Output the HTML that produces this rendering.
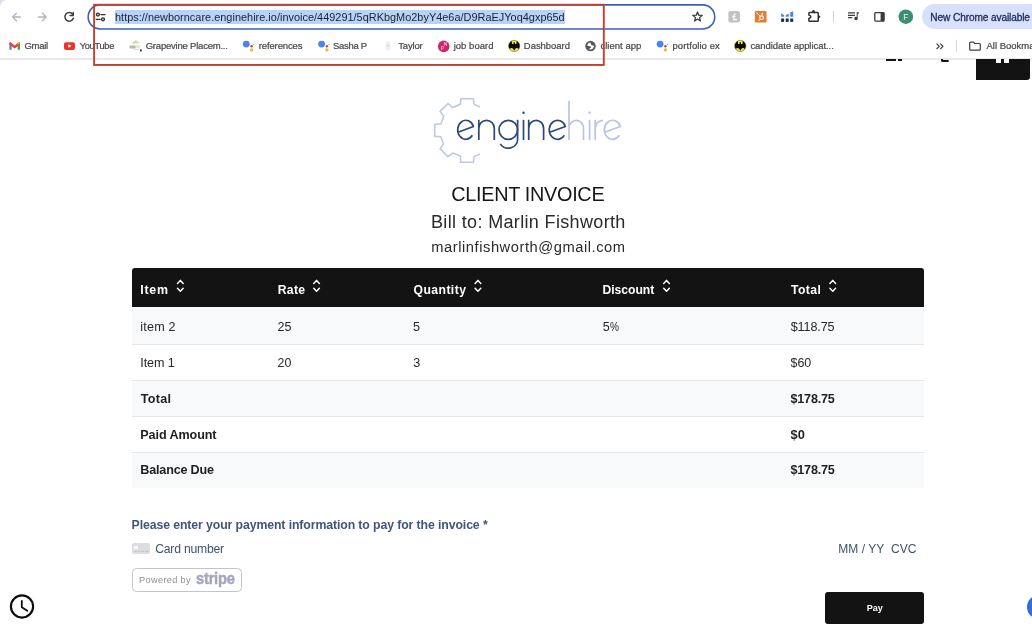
<!DOCTYPE html>
<html>
<head>
<meta charset="utf-8">
<title>Client Invoice</title>
<style>
*{box-sizing:border-box;margin:0;padding:0}
html,body{width:1032px;height:628px;overflow:hidden;background:#fff}
body{font-family:"Liberation Sans",sans-serif;position:relative;color:#212529}
#w{position:absolute;left:0;top:0;width:1032px;height:628px;overflow:hidden;will-change:transform}
.a{position:absolute}
.t{position:absolute;white-space:pre;line-height:1}
svg{position:absolute;overflow:visible}
#sep{left:0;top:58px;width:1032px;height:1.5px;background:#e9e9eb}
#sel{left:115px;top:10px;width:450px;height:13.5px;background:#b6d4f9}
#newchrome{left:921.7px;top:4.3px;width:130px;height:24.8px;border-radius:12.4px;background:#d7e1fb}
#thead{left:132px;top:268px;width:792px;height:39px;background:#141314;border-radius:3px 3px 0 0}
.row{position:absolute;left:132px;width:792px;background:#f8f9fa}
.ln{position:absolute;left:132px;width:792px;height:1px;background:#e4e6e9}
</style>
</head>
<body>
<div id="w">
<!-- ===== browser chrome ===== -->
<div class="a" style="left:0;top:0;width:6px;height:6px;background:radial-gradient(circle at 100% 100%,#fff 5.2px,#dddcf6 6px)"></div>
<div class="a" id="sep"></div>
<svg style="left:0;top:0" width="1032" height="34" viewBox="0 0 1032 34" fill="none"><rect x="88.15" y="4.85" width="626.6" height="24.1" rx="12.05" stroke="#3a60bf" stroke-width="1.55" fill="#fff"/></svg>
<div class="a" id="sel"></div>
<div class="t" style="left:115.03px;top:11.7px;font-size:10.9px;letter-spacing:0.025px;color:#1f2126;">https://newborncare.enginehire.io/invoice/449291/5qRKbgMo2byY4e6a/D9RaEJYoq4gxp65d</div>
<div class="a" id="newchrome"></div>
<div class="t" style="left:930.37px;top:12.7px;font-size:10.1px;letter-spacing:-0.101px;color:#1c2a5a;-webkit-text-stroke:0.3px #1c2a5a;">New Chrome available</div>
<!-- toolbar icons -->
<svg style="left:0;top:0" width="1032" height="60" viewBox="0 0 1032 60" fill="none">
 <!-- back / forward -->
 <g stroke="#b4b4b6" stroke-width="1.3" stroke-linecap="round" stroke-linejoin="round">
  <path d="M20.4 17H12.6M16.4 13.2L12.6 17l3.8 3.8"/>
  <path d="M38.4 17h7.8M42.4 13.2l3.8 3.8-3.8 3.8"/>
 </g>
 <!-- reload -->
 <g stroke="#3a3b3d" stroke-width="1.45" stroke-linecap="round" stroke-linejoin="round">
  <path d="M72.6 14.2A4.3 4.3 0 1 0 73.3 18.2"/>
  <path d="M73.2 12.4v3.1h-3.1" />
 </g>
 <!-- tune -->
 <g stroke="#2c2d30" stroke-width="1.35" stroke-linecap="round">
  <circle cx="97.9" cy="14.6" r="1.45"/><path d="M101 14.6h4"/>
  <circle cx="103" cy="19.3" r="1.45"/><path d="M96.2 19.3h4"/>
 </g>
 <!-- star -->
 <path d="M697.50 11.95L698.76 15.21L702.26 15.40L699.54 17.61L700.44 21.00L697.50 19.10L694.56 21.00L695.46 17.61L692.74 15.40L696.24 15.21Z" stroke="#333437" stroke-width="1.200" stroke-linejoin="round"/>
 <!-- grey ext -->
 <rect x="728.4" y="10.9" width="11.6" height="11.6" rx="2" fill="#c2c2c2"/>
 <path d="M735.600 14.300c-1.100-.4-1.700.2-1.700 1.200v4.200h3.100M732.300 16.500h3.100" stroke="#fff" stroke-width="1.250"/>
 <!-- hubspot -->
 <rect x="754.9" y="10.9" width="11.6" height="11.6" rx="1.2" fill="#e87a30"/>
 <g stroke="#fff" stroke-width="0.950"><circle cx="761.600" cy="17.700" r="1.850" stroke-width="1.100"/><path d="M760.300 16.400l-3-2.900M762 15.800l.3-2M760.300 19.100l-1.200 1.200"/></g><g fill="#fff"><circle cx="757.100" cy="13.300" r=".75"/><circle cx="762.350" cy="13.600" r=".8"/><circle cx="759" cy="20.350" r=".7"/></g>
 <!-- blue bars -->
 <g>
  <rect x="781.100" y="18.500" width="3" height="3.400" fill="#1b2b62"/><rect x="785.700" y="18.500" width="3" height="3.400" fill="#1b2b62"/><rect x="790.200" y="18.500" width="3" height="3.400" fill="#1b2b62"/>
  <path d="M781.100 13.300L784.100 15.300V16.700H781.100Z" fill="#4782e4"/><path d="M785.700 15.300L788.700 13.400V16.700H785.700Z" fill="#4782e4"/><path d="M790.200 12.400L793.200 11.200V16.700H790.200Z" fill="#4782e4"/>
 </g>
 <!-- puzzle -->
 <path d="M809.650 12.400H817.450a.8.8 0 0 1 .8.8V20.450a.8.8 0 0 1-.8.8H809.650a.8.8 0 0 1-.8-.8V18.600c1.500-.3 2-1 2-1.750s-.5-1.450-2-1.750V13.200a.8.8 0 0 1 .8-.8z" stroke="#2f3033" stroke-width="1.500" stroke-linejoin="round"/>
 <path d="M811.900 12a1.550 1.900 0 0 1 3.100 0z" fill="#2f3033"/><path d="M818.600 15.400a1.700 1.400 0 0 1 0 2.800z" fill="#2f3033"/>
 <!-- separator -->
 <rect x="832.9" y="10.9" width="1.1" height="11.6" fill="#cdd7ee"/>
 <!-- playlist -->
 <g stroke="#3a3b3d" stroke-width="1.250"><path d="M848 12.900h7M848 15.250h7M848 17.600h4.300"/></g>
 <path d="M856.700 12.200h2.300v1.400h-1.300v4.800a1.700 1.700 0 1 1-1-1.500z" fill="#3a3b3d"/>
 <!-- side panel -->
 <rect x="874.8" y="12.6" width="9.3" height="8.5" rx="0.8" stroke="#3a3b3d" stroke-width="1.3"/>
 <rect x="880.6" y="12.6" width="3.5" height="8.5" fill="#3a3b3d"/>
 <!-- avatar -->
 <circle cx="905.8" cy="16.7" r="7.3" fill="#3e8e75"/>
 <!-- bookmarks bar icons -->
 <!-- gmail -->
 <g>
  <path d="M9.4 42.6v7.2h2.3v-4.9z" fill="#4285f4"/>
  <path d="M20 42.6v7.2h-2.3v-4.9z" fill="#34a853"/>
  <path d="M9.4 42.6l1-.5 4.3 3.3 4.3-3.3 1 .5v2.1l-5.3 3.9-5.3-3.9z" fill="#ea4335"/>
  <path d="M17.7 44.9l2.3-1.9v-.4l-1-.5-1.3 1z" fill="#fbbc04"/>
 </g>
 <!-- youtube -->
 <rect x="64" y="42.2" width="11" height="7.7" rx="2" fill="#e9342b"/>
 <path d="M68.3 44.3l3.2 1.75-3.2 1.75z" fill="#fff"/>
 <!-- grapevine -->
 <g><path d="M132.200 43.600c.3-1.800 1.600-3 3.400-3.200 1.400-.1 2.700.5 3.400 1.500l1 .3-.6 1.200-2.600.4z" fill="#d3dfb6" opacity=".85"/><rect x="133.200" y="41.400" width="1" height="2.300" fill="#b9c99a" opacity=".7"/><rect x="135.300" y="40.800" width="1" height="2.600" fill="#bccb9c" opacity=".6"/>
 <rect x="129.500" y="45.400" width="6.200" height="3" rx=".5" fill="#a9aaac" opacity=".85"/><rect x="135.900" y="45" width="4.400" height="3.200" fill="#e4edcb"/><rect x="133" y="48.900" width="6.200" height=".8" fill="#d4d5d6"/>
 <rect x="140" y="49.300" width="1.700" height="2.100" rx=".4" fill="#2b2e34"/></g>
 <!-- google assistant x3 -->
 <g><circle cx="246.300" cy="44.100" r="3.450" fill="#4a84ee"/><circle cx="251.600" cy="46.200" r="1.250" fill="#c8423a"/><circle cx="251.600" cy="49.900" r="1.700" fill="#eab93a"/><circle cx="253.800" cy="44.400" r="0.550" fill="#7a9a5a"/></g>
 <g transform="translate(75.3,0)"><circle cx="246.300" cy="44.100" r="3.450" fill="#4a84ee"/><circle cx="251.600" cy="46.200" r="1.250" fill="#c8423a"/><circle cx="251.600" cy="49.900" r="1.700" fill="#eab93a"/><circle cx="253.800" cy="44.400" r="0.550" fill="#7a9a5a"/></g>
 <g transform="translate(413.8,0)"><circle cx="246.300" cy="44.100" r="3.450" fill="#4a84ee"/><circle cx="251.600" cy="46.200" r="1.250" fill="#c8423a"/><circle cx="251.600" cy="49.900" r="1.700" fill="#eab93a"/><circle cx="253.800" cy="44.400" r="0.550" fill="#7a9a5a"/></g>
 <!-- taylor -->
 <g opacity="0.8"><rect x="385.5" y="41.5" width="5" height="9" rx="2" fill="#ececec"/><path d="M386.8 44.5l2.2 2.2m0-2.2l-2.2 2.2" stroke="#c8c8c8" stroke-width="0.8"/></g>
 <!-- pink -->
 <circle cx="443.7" cy="46.4" r="5.8" fill="#d2246f"/>
 <!-- batman x2 -->
 <g><circle cx="514.200" cy="45.900" r="5.650" fill="#f1e84a" stroke="#4a4a18" stroke-width="0.500"/>
 <path d="M508.700 45.800C508.800 43.700 510.100 41.900 511.800 41L512 44h1.500v-2.100l.7.500.7-.500V44h1.500l.2-3c1.700.900 3 2.700 3.100 4.800 0 1.300-.4 2.400-1 3.300-.9-1.500-2.500-1.500-3.400-.3l-1.100 1.900-1.100-1.900c-.9-1.200-2.500-1.200-3.400.3-.6-.9-1-2-1-3.300z" fill="#0c0c06"/></g>
 <g transform="translate(226.100,0)"><circle cx="514.200" cy="45.900" r="5.650" fill="#f1e84a" stroke="#4a4a18" stroke-width="0.500"/>
 <path d="M508.700 45.800C508.800 43.700 510.100 41.900 511.800 41L512 44h1.500v-2.100l.7.500.7-.500V44h1.500l.2-3c1.700.900 3 2.700 3.100 4.800 0 1.300-.4 2.400-1 3.300-.9-1.500-2.500-1.500-3.400-.3l-1.100 1.900-1.100-1.900c-.9-1.200-2.500-1.200-3.400.3-.6-.9-1-2-1-3.300z" fill="#0c0c06"/></g>
 <!-- globe -->
 <circle cx="590.500" cy="46.100" r="5.250" fill="#56575a"/>
 <path d="M589.900 42.600C587.600 43.500 586.900 45 587.700 45.900C589 46.300 590.600 46 591.300 47.100C591 48 590 48.500 589 49C590 49.900 591.500 49.700 592.600 48.800C593.800 47.700 594.400 46.600 594 45.600C592.800 45.800 591.600 45.400 591 44.600C590.600 43.800 591 43 589.900 42.600Z" fill="#fff"/>
 <!-- chevrons -->
 <path d="M936.600 43.600l2.600 2.700-2.600 2.700M940.300 43.600l2.600 2.700-2.600 2.700" stroke="#3c4043" stroke-width="1.2"/>
 <rect x="955.8" y="40.200" width="1.1" height="11.600" fill="#cdd7ee"/>
 <!-- folder -->
 <path d="M969.700 43v6.200c0 .5.400.9.900.9h8.800c.5 0 .9-.4.900-.9v-4.800c0-.5-.4-.9-.9-.9h-4.600l-1.200-1.300h-3c-.5 0-.9.400-.9.900z" stroke="#3c4043" stroke-width="1.2" stroke-linejoin="round"/>
</svg>
<div class="t" style="left:903.300px;top:13.100px;font-size:8.400px;color:#f2fbf7">F</div>
<div class="t" style="left:440.800px;top:44px;font-size:6px;color:#fff;font-family:'Liberation Serif',serif">p</div><div class="t" style="left:443.500px;top:42.300px;font-size:5.600px;color:#fff;font-family:'Liberation Serif',serif">N</div>
<div class="t" style="left:24.5px;top:41.2px;font-size:9.5px;letter-spacing:-0.289px;color:#46484b;-webkit-text-stroke:0.22px #46484b;">Gmail</div><div class="t" style="left:79.67px;top:42.2px;font-size:9.16px;letter-spacing:-0.224px;color:#46484b;-webkit-text-stroke:0.22px #46484b;">YouTube</div><div class="t" style="left:145.7px;top:41.2px;font-size:9.5px;letter-spacing:-0.212px;color:#46484b;-webkit-text-stroke:0.22px #46484b;">Grapevine Placem...</div><div class="t" style="left:258.74px;top:41.2px;font-size:9.5px;letter-spacing:-0.123px;color:#46484b;-webkit-text-stroke:0.22px #46484b;">references</div><div class="t" style="left:333.09px;top:41.2px;font-size:9.48px;letter-spacing:-0.295px;color:#46484b;-webkit-text-stroke:0.22px #46484b;">Sasha P</div><div class="t" style="left:398.26px;top:41.2px;font-size:9.5px;letter-spacing:-0.172px;color:#46484b;-webkit-text-stroke:0.22px #46484b;">Taylor</div><div class="t" style="left:453.68px;top:41.2px;font-size:9.5px;letter-spacing:0.026px;color:#46484b;-webkit-text-stroke:0.22px #46484b;">job board</div><div class="t" style="left:523.8px;top:41.2px;font-size:9.5px;letter-spacing:-0.032px;color:#46484b;-webkit-text-stroke:0.22px #46484b;">Dashboard</div><div class="t" style="left:600.42px;top:41.2px;font-size:9.5px;letter-spacing:0.028px;color:#46484b;-webkit-text-stroke:0.22px #46484b;">client app</div><div class="t" style="left:672.5px;top:41.2px;font-size:9.5px;letter-spacing:0.076px;color:#46484b;-webkit-text-stroke:0.22px #46484b;">portfolio ex</div><div class="t" style="left:750.42px;top:41.2px;font-size:9.5px;letter-spacing:-0.056px;color:#46484b;-webkit-text-stroke:0.22px #46484b;">candidate applicat...</div>
<div class="t" style="left:986.5px;top:41.2px;font-size:9.5px;color:#46484b;-webkit-text-stroke:0.22px #46484b">All Bookmarks</div>
<svg style="left:0;top:0;z-index:50" width="1032" height="70" viewBox="0 0 1032 70" fill="none"><rect x="94.1" y="4.75" width="509.7" height="60.2" stroke="#c4412c" stroke-width="1.9"/></svg>

<!-- ===== page ===== -->
<!-- cut-off header fragments -->
<div class="a" style="left:975.5px;top:59px;width:54.3px;height:20.5px;background:#141314;border-radius:0 0 3px 0"></div>
<div class="a" style="left:996px;top:59px;width:5.4px;height:3.8px;background:#fff"></div>
<div class="a" style="left:1003.6px;top:59px;width:5.6px;height:3.8px;background:#fff"></div>
<div class="a" style="left:886px;top:59px;width:10px;height:2.3px;background:#141314"></div>
<div class="a" style="left:898px;top:59px;width:4.2px;height:2.3px;background:#141314"></div>
<div class="a" style="left:941px;top:56px;width:7.6px;height:6.4px;border-left:2px solid #141314;border-bottom:2px solid #141314;border-bottom-left-radius:2px;clip-path:inset(3px 0 0 0)"></div>
<!-- logo -->
<svg style="left:425px;top:90px" width="210" height="80" viewBox="425 90 210 80" fill="none" stroke-linecap="butt">
 <path d="M480 107.100C477.800 106.200 475.800 105 474 104.100L473.400 98.700H460.700L460.400 104.100L452.800 107.500L448 103.500L440.100 111.400L443.700 116.200L441.100 123.700L434.700 124.400V136.200L440.700 136.800L443.500 144L440.100 148.900L448 156.700L452.800 153.100L460.400 156.100L460.700 162.200H473.400L474 156.700C475.800 155.900 477.800 155 480 153.900" stroke="#bec7e8" stroke-width="1.600" stroke-linejoin="miter"/>
 <g stroke="#2d4877" stroke-width="1.700">
  <path d="M458 132.300L473.400 126.500A8.100 9.500 0 1 0 472.400 135.300"/>
  <path d="M478.800 119.800V140.100M478.800 128.200A7.750 7.800 0 0 1 494.300 128.200V140.100"/>
  <ellipse cx="508.300" cy="129.850" rx="9.300" ry="9.500"/>
  <path d="M517.600 119.800V139.500A9.300 8.600 0 0 1 500.300 143.900"/>
  <path d="M523.500 119.800V140.100"/>
  <path d="M528.700 119.800V140.100M528.700 128.200A7.450 7.800 0 0 1 543.600 128.200V140.100"/>
  <path d="M549.700 132.300L565.300 126.500A8.300 9.500 0 1 0 564.300 135.300"/>
 </g>
 <circle cx="523.500" cy="112.800" r="1.250" fill="#2d4877"/>
 <g stroke="#b9c3e8" stroke-width="1.700">
  <path d="M569 101.100V140.100M569 128.200A7.250 7.800 0 0 1 583.500 128.200V140.100"/>
  <path d="M589.600 119.800V140.100"/>
  <path d="M595.200 119.800V140.100M595.200 128.200A7.800 7.800 0 0 1 603 120.400"/>
  <path d="M604.700 132.300L620.300 126.500A8.250 9.500 0 1 0 619.300 135.300"/>
 </g>
 <circle cx="589.600" cy="112.800" r="1.250" fill="#b9c3e8"/>
</svg>
<div class="t" style="left:451.28px;top:185.0px;font-size:19.84px;letter-spacing:-0.296px;color:#161616;">CLIENT INVOICE</div><div class="t" style="left:431.02px;top:213.4px;font-size:18.0px;letter-spacing:0.346px;color:#2a2a2a;">Bill to: Marlin Fishworth</div><div class="t" style="left:431.34px;top:240.3px;font-size:14.7px;letter-spacing:0.544px;color:#2a2a2a;">marlinfishworth@gmail.com</div>
<!-- table -->
<div class="a" id="thead"></div>
<div class="row" style="top:307px;height:37.4px"></div>
<div class="ln" style="top:344.2px"></div>
<div class="ln" style="top:380px"></div>
<div class="row" style="top:381px;height:35.4px"></div>
<div class="ln" style="top:416px"></div>
<div class="ln" style="top:452px"></div>
<div class="row" style="top:453px;height:35px"></div>
<div class="t" style="left:140.21px;top:284.2px;font-size:12.4px;font-weight:bold;letter-spacing:0.8px;color:#ffffff;">Item</div><div class="t" style="left:277.78px;top:284.2px;font-size:12.2px;font-weight:bold;letter-spacing:0.27px;color:#ffffff;">Rate</div><div class="t" style="left:413.5px;top:284.2px;font-size:12.2px;font-weight:bold;letter-spacing:0.433px;color:#ffffff;">Quantity</div><div class="t" style="left:602.43px;top:284.2px;font-size:12.2px;font-weight:bold;letter-spacing:-0.044px;color:#ffffff;">Discount</div><div class="t" style="left:790.93px;top:284.2px;font-size:12.2px;font-weight:bold;letter-spacing:0.45px;color:#ffffff;">Total</div>
<svg style="left:0;top:270px" width="1032" height="30" viewBox="0 270 1032 30" fill="none" stroke="#fff" stroke-width="1.5" stroke-linecap="round" stroke-linejoin="round">
 <g><path d="M177.500 283.400l2.850-3 2.850 3M177.500 288.300l2.850 3 2.850-3"/></g>
 <g transform="translate(136.200,0)"><path d="M177.500 283.400l2.850-3 2.850 3M177.500 288.300l2.850 3 2.850-3"/></g><g transform="translate(297.600,0)"><path d="M177.500 283.400l2.850-3 2.850 3M177.500 288.300l2.850 3 2.850-3"/></g><g transform="translate(486.200,0)"><path d="M177.500 283.400l2.850-3 2.850 3M177.500 288.300l2.850 3 2.850-3"/></g><g transform="translate(652.400,0)"><path d="M177.500 283.400l2.850-3 2.850 3M177.500 288.300l2.850 3 2.850-3"/></g>
</svg>
<div class="t" style="left:140.25px;top:320.8px;font-size:12.6px;letter-spacing:0.204px;color:#26282b;">item 2</div><div class="t" style="left:277.56px;top:320.8px;font-size:12.56px;color:#26282b;">25</div><div class="t" style="left:413.09px;top:320.8px;font-size:12.6px;color:#26282b;">5</div><div class="t" style="left:602.7px;top:320.8px;font-size:12.6px;color:#26282b">5<span style="display:inline-block;transform:scaleX(.8);transform-origin:0 50%;margin-left:.4px">%</span></div><div class="t" style="left:790.69px;top:320.8px;font-size:12.6px;letter-spacing:-0.117px;color:#26282b;">$118.75</div>
<div class="t" style="left:140.25px;top:356.8px;font-size:12.6px;letter-spacing:-0.101px;color:#26282b;">Item 1</div><div class="t" style="left:277.62px;top:356.8px;font-size:12.45px;color:#26282b;">20</div><div class="t" style="left:413.32px;top:356.8px;font-size:12.6px;color:#26282b;">3</div><div class="t" style="left:790.49px;top:356.8px;font-size:12.49px;color:#26282b;">$60</div>
<div class="t" style="left:140.75px;top:392.7px;font-size:12.6px;font-weight:bold;letter-spacing:0.261px;color:#1d1f22;">Total</div><div class="t" style="left:790.53px;top:392.7px;font-size:12.59px;font-weight:bold;letter-spacing:-0.207px;color:#1d1f22;">$178.75</div><div class="t" style="left:140.31px;top:428.6px;font-size:12.6px;font-weight:bold;letter-spacing:-0.098px;color:#1d1f22;">Paid Amount</div><div class="t" style="left:790.53px;top:428.6px;font-size:12.86px;font-weight:bold;color:#1d1f22;">$0</div><div class="t" style="left:140.31px;top:463.5px;font-size:12.6px;font-weight:bold;letter-spacing:-0.19px;color:#1d1f22;">Balance Due</div><div class="t" style="left:790.53px;top:463.5px;font-size:12.59px;font-weight:bold;letter-spacing:-0.207px;color:#1d1f22;">$178.75</div>
<!-- payment -->
<div class="t" style="left:131.62px;top:519.0px;font-size:12.3px;font-weight:bold;letter-spacing:-0.111px;color:#41577a;">Please enter your payment information to pay for the invoice *</div>
<div class="a" style="left:132px;top:543.200px;width:17.700px;height:11.300px;border-radius:2px;background:#dcdde0"></div>
<div class="a" style="left:133.900px;top:545.700px;width:3.700px;height:2.900px;background:#fbfbfb"></div>
<div class="a" style="left:134px;top:551px;width:13.600px;height:1px;background:repeating-linear-gradient(90deg,#c3c5c9 0 2.600px,transparent 2.600px 3.650px)"></div>
<div class="t" style="left:155.2px;top:543.3px;font-size:12.2px;letter-spacing:-0.215px;color:#3c5273;">Card number</div><div class="t" style="left:838.24px;top:543.1px;font-size:12.0px;letter-spacing:0.029px;color:#3c5273;">MM / YY&nbsp; CVC</div>
<div class="a" style="left:132.300px;top:567.500px;width:109.700px;height:24px;border:1px solid #c3c3d0;border-radius:4.500px;background:#fff"></div>
<div class="t" style="left:139.03px;top:575.7px;font-size:9.2px;letter-spacing:0.347px;color:#8c8c9b;">Powered by</div>
<div class="t" id="stripe" style="left:195.600px;top:569.800px;font-size:17px;font-weight:bold;color:#a4a4bc;letter-spacing:-0.3px;-webkit-text-stroke:0.45px #a4a4bc;transform:scaleX(0.87);transform-origin:0 0">stripe</div>
<div class="a" style="left:825.200px;top:591.800px;width:99px;height:32px;background:#141314;border-radius:3px"></div>
<div class="t" style="left:866.81px;top:604.4px;font-size:9.06px;font-weight:bold;color:#ffffff;">Pay</div>
<!-- clock -->
<svg style="left:5px;top:590px" width="34" height="34" viewBox="5 590 34 34" fill="none" stroke="#0d0d0d" stroke-linecap="round" stroke-linejoin="round">
 <circle cx="22" cy="606.500" r="11.100" stroke-width="2.150"/>
 <path d="M21.800 601V607.300L27.300 610.800" stroke-width="1.800"/>
</svg>
<div class="a" style="left:1026.500px;top:595.300px;width:24px;height:24px;border-radius:50%;background:#2f6ee6"></div>

</div>
</body>
</html>
